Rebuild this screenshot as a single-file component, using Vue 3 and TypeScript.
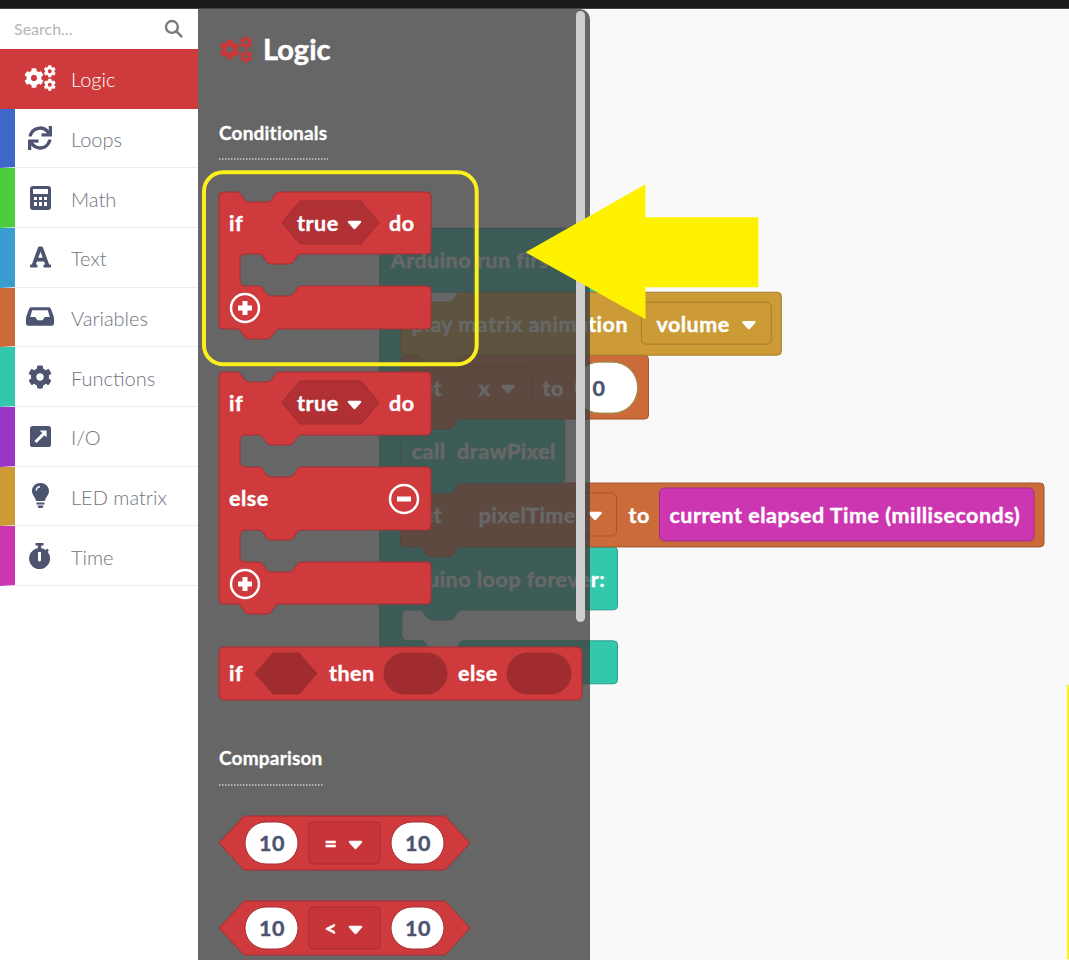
<template>
  <div class="page">
    <div class="topbar"></div>
    <div class="main">
      <!-- toolbox -->
      <aside class="toolbox">
        <div class="search">
          <span class="search-text">Search...</span>
          <svg class="search-ic" viewBox="0 0 24 24" fill="none" stroke="currentColor" stroke-width="3" stroke-linecap="round"><circle cx="10" cy="10" r="7.5" /><line x1="16" y1="16" x2="22" y2="22" /></svg>
        </div>
        <div
          v-for="cat in CATEGORIES"
          :key="cat.label"
          class="cat"
          :class="{ active: cat.label === 'Logic' }"
          :style="{ borderLeftColor: cat.color }"
        >
          <span class="cat-ic">
            <svg :width="cat.w" :height="cat.h" :viewBox="cat.box" fill="currentColor" fill-rule="evenodd" v-html="cat.svg" />
          </span>
          <span class="cat-label">{{ cat.label }}</span>
        </div>
      </aside>

      <section class="workspace">
        <!-- blocks on the canvas, coordinates are page coordinates -->
        <svg class="layer" viewBox="197 9 872 951">
          <path v-for="(s, i) in WORK_SHAPES" :key="i" :d="s.d" :fill="s.fill" :stroke="s.stroke" stroke-width="1" />
          <path v-for="(c, i) in WORK_CARETS" :key="'c' + i" class="caret" :d="caret(c[0], c[1])" />
          <text v-for="(t, i) in WORK_TEXT" :key="'t' + i" class="blk" :class="t.cls" :x="t.x" :y="t.y">{{ t.text }}</text>
        </svg>

        <!-- flyout -->
        <div class="flyout">
          <svg class="layer" viewBox="198 9 392 951">
            <svg x="219" y="36" width="34" height="27" viewBox="0 0 32 26" fill="#c8383b" fill-rule="evenodd" v-html="COGS" />
            <text class="fly-title" x="263" y="60">Logic</text>
            <text class="fly-head" x="219" y="140">Conditionals</text>
            <line class="dots" x1="219" x2="328" y1="159" y2="159" />
            <text class="fly-head" x="219" y="765">Comparison</text>
            <line class="dots" x1="219" x2="324" y1="785" y2="785" />

            <path v-for="(s, i) in FLY_SHAPES" :key="i" :d="s.d" :fill="s.fill" :stroke="s.stroke" stroke-width="1" />
            <path v-for="(c, i) in FLY_CARETS" :key="'c' + i" class="caret" :d="caret(c[0], c[1])" />
            <text v-for="(t, i) in FLY_TEXT" :key="'t' + i" class="blk" :class="t.cls" :x="t.x" :y="t.y">{{ t.text }}</text>

            <g v-for="b in PLUS" :key="'p' + b[1]" class="mut">
              <circle :cx="b[0]" :cy="b[1]" r="14" />
              <path :d="`M${b[0] - 7} ${b[1]}h14M${b[0]} ${b[1] - 7}v14`" />
            </g>
            <g class="mut">
              <circle cx="404" cy="499" r="14" />
              <path d="M397 499h14" />
            </g>

            <rect class="scroll" x="576" y="11" width="9" height="611" rx="4.5" />
          </svg>
        </div>

        <!-- annotation drawn on top of the screenshot -->
        <svg class="layer over" viewBox="197 9 872 951">
          <rect x="203" y="172" width="273" height="192" rx="19" fill="none" stroke="#fbf01e" stroke-width="4" />
          <polygon points="525,252 645,184 645,217 758,217 758,287 645,287 645,319" fill="#fff200" />
          <rect x="1067" y="685" width="2" height="275" fill="#fbf01e" />
        </svg>
      </section>
    </div>
  </div>
</template>

<script setup lang="ts">
type Shape = { d: string; fill: string; stroke: string };
type Label = { x: number; y: number; text: string; cls?: string };

const COG =
  'M487.4 315.7l-42.6-24.6c4.3-23.2 4.3-47 0-70.2l42.6-24.6c4.9-2.8 7.1-8.6 5.5-14-11.1-35.6-30-67.8-54.7-94.6-3.8-4.1-10-5.1-14.8-2.3L380.8 110c-17.9-15.4-38.5-27.3-60.8-35.1V25.8c0-5.6-3.9-10.5-9.4-11.7-36.7-8.2-74.3-7.8-109.2 0-5.5 1.2-9.4 6.1-9.4 11.7V75c-22.2 7.9-42.8 19.8-60.8 35.1L88.7 85.5c-4.9-2.8-11-1.9-14.8 2.3-24.7 26.7-43.6 58.9-54.7 94.6-1.7 5.4.6 11.2 5.5 14L67.3 221c-4.3 23.2-4.3 47 0 70.2l-42.6 24.6c-4.9 2.8-7.1 8.6-5.5 14 11.1 35.6 30 67.8 54.7 94.6 3.8 4.1 10 5.1 14.8 2.3l42.6-24.6c17.9 15.4 38.5 27.3 60.8 35.1v49.2c0 5.6 3.9 10.5 9.4 11.7 36.7 8.2 74.3 7.8 109.2 0 5.5-1.2 9.4-6.1 9.4-11.7v-49.2c22.2-7.9 42.8-19.8 60.8-35.1l42.6 24.6c4.9 2.8 11 1.9 14.8-2.3 24.7-26.7 43.6-58.9 54.7-94.6 1.5-5.5-.7-11.3-5.6-14.1zM256 336c-44.1 0-80-35.9-80-80s35.9-80 80-80 80 35.9 80 80-35.9 80-80 80z';

const COGS = `<g transform="translate(0 3) scale(.039)"><path d="${COG}"/></g><g transform="translate(19.5 0) scale(.0245)"><path d="${COG}"/></g><g transform="translate(19.5 13.5) scale(.0245)"><path d="${COG}"/></g>`;

const SYNC =
  'M440.65 12.57l4 82.77A247.16 247.16 0 0 0 255.83 8C134.73 8 33.91 94.92 12.29 209.82A12 12 0 0 0 24.09 224h49.05a12 12 0 0 0 11.67-9.26 175.91 175.91 0 0 1 317-56.94l-101.46-4.86a12 12 0 0 0-12.57 12v47.41a12 12 0 0 0 12 12H500a12 12 0 0 0 12-12V12a12 12 0 0 0-12-12h-47.37a12 12 0 0 0-11.98 12.57zM255.83 432a175.61 175.61 0 0 1-146-77.8l101.8 4.87a12 12 0 0 0 12.57-12v-47.4a12 12 0 0 0-12-12H12a12 12 0 0 0-12 12V500a12 12 0 0 0 12 12h47.35a12 12 0 0 0 12-12.6l-4.15-82.57A247.17 247.17 0 0 0 255.83 504c121.11 0 221.93-86.92 243.55-201.82a12 12 0 0 0-11.8-14.18h-49.05a12 12 0 0 0-11.67 9.26A175.86 175.86 0 0 1 255.83 432z';

const FONT_A =
  'M432 416h-23.41L277.88 53.69A32 32 0 0 0 247.58 32h-47.16a32 32 0 0 0-30.3 21.69L39.41 416H16a16 16 0 0 0-16 16v32a16 16 0 0 0 16 16h128a16 16 0 0 0 16-16v-32a16 16 0 0 0-16-16h-19.6l23.3-64h152.6l23.3 64H304a16 16 0 0 0-16 16v32a16 16 0 0 0 16 16h128a16 16 0 0 0 16-16v-32a16 16 0 0 0-16-16zM176.85 272L224 142.51 271.15 272z';

const CATEGORIES = [
  { label: 'Logic', color: '#cf3a3d', w: 32, h: 26, box: '0 0 32 26', svg: COGS },
  { label: 'Loops', color: '#3e67c9', w: 24, h: 24, box: '0 0 512 512', svg: `<path d="${SYNC}"/>` },
  { label: 'Math', color: '#4dcc3e', w: 21, h: 24, box: '0 0 21 24', svg: '<path d="M3 0H18a3 3 0 0 1 3 3V21a3 3 0 0 1-3 3H3a3 3 0 0 1-3-3V3a3 3 0 0 1 3-3ZM3 3V8H18V3ZM4 11V14H7V11ZM9 11V14H12V11ZM14 11V14H17V11ZM4 16V20H7V16ZM9 16V20H12V16ZM14 16V20H17V16Z"/>' },
  { label: 'Text', color: '#3b9ccf', w: 21, h: 24, box: '0 26 448 460', svg: `<path d="${FONT_A}"/>` },
  { label: 'Variables', color: '#cc6b3a', w: 28, h: 19, box: '0 0 54 36', svg: '<path d="M10 0H44Q47 0 48 3L54 20V32Q54 36 50 36H4Q0 36 0 32V20L6 3Q7 0 10 0ZM12 6 8 19H18L22 25H32L36 19H46L42 6Z"/>' },
  { label: 'Functions', color: '#33c7ae', w: 24, h: 24, box: '0 0 512 512', svg: `<path d="${COG}"/>` },
  { label: 'I/O', color: '#9b36c9', w: 21, h: 21, box: '0 0 24 24', svg: '<path d="M3 0H21a3 3 0 0 1 3 3V21a3 3 0 0 1-3 3H3a3 3 0 0 1-3-3V3a3 3 0 0 1 3-3ZM11 5 14 8 5 17 7.5 19.5 16.5 10.5 19 13V5Z"/>' },
  { label: 'LED matrix', color: '#cc9b36', w: 17, h: 25, box: '0 0 17 25', svg: '<path d="M8.5 0C13.3 0 17 3.5 17 8C17 12 14 13.5 12.8 18H4.2C3 13.5 0 12 0 8C0 3.5 3.7 0 8.5 0ZM8 3C5.5 3 3.5 5 3.5 7.5H5C5 5.7 6.3 4.5 8 4.5ZM4.5 19.5H12.5V21.5H4.5ZM5.5 22.5H11.5L10.5 25H6.5Z"/>' },
  { label: 'Time', color: '#cc36b0', w: 22, h: 26, box: '0 0 22 26', svg: '<path d="M6.5 0H14.5V2.5H12.2V5.2A10.5 10.5 0 0 1 16.8 7L18.2 5.6 20 7.4 18.6 8.8A10.5 10.5 0 1 1 8.8 5.2V2.5H6.5ZM9 9V17A1.5 1.5 0 0 0 12 17V9Z"/>' },
];

// block connector, running right
function notch(x: number, y: number) {
  return `L${x} ${y}C${x + 5} ${y} ${x + 6} ${y + 10} ${x + 12} ${y + 10}H${x + 30}C${x + 36} ${y + 10} ${x + 37} ${y} ${x + 42} ${y}`;
}
// same connector, running left from x
function back(x: number, y: number) {
  return `L${x} ${y}C${x - 5} ${y} ${x - 6} ${y + 10} ${x - 12} ${y + 10}H${x - 30}C${x - 36} ${y + 10} ${x - 37} ${y} ${x - 42} ${y}`;
}
function stack(x1: number, x2: number, top: number, bottom: number) {
  return (
    `M${x1} ${top + 4}Q${x1} ${top} ${x1 + 4} ${top}` + notch(x1 + 18, top) +
    `H${x2 - 4}Q${x2} ${top} ${x2} ${top + 4}V${bottom - 4}Q${x2} ${bottom} ${x2 - 4} ${bottom}` +
    back(x1 + 60, bottom) + `H${x1 + 4}Q${x1} ${bottom} ${x1} ${bottom - 4}Z`
  );
}
function cBlock(top: number, gaps: number[][], bottom: number) {
  let d = 'M219 ' + (top + 4) + `Q219 ${top} 223 ${top}` + notch(237, top) + `H427Q431 ${top} 431 ${top + 4}`;
  for (const [a, b] of gaps) {
    d += `V${a - 4}Q431 ${a} 427 ${a}` + back(301, a) + `H246Q240 ${a} 240 ${a + 6}V${b - 6}Q240 ${b} 246 ${b}` + notch(259, b) + `H427Q431 ${b} 431 ${b + 4}`;
  }
  return d + `V${bottom - 4}Q431 ${bottom} 427 ${bottom}` + back(279, bottom) + `H223Q219 ${bottom} 219 ${bottom - 4}Z`;
}
function hex(x1: number, x2: number, y1: number, y2: number, s: number) {
  const m = (y1 + y2) / 2;
  return `M${x1} ${m}L${x1 + s} ${y1}H${x2 - s}L${x2} ${m}L${x2 - s} ${y2}H${x1 + s}Z`;
}
function box(x1: number, x2: number, y1: number, y2: number, r: number) {
  return `M${x1 + r} ${y1}H${x2 - r}A${r} ${r} 0 0 1 ${x2} ${y1 + r}V${y2 - r}A${r} ${r} 0 0 1 ${x2 - r} ${y2}H${x1 + r}A${r} ${r} 0 0 1 ${x1} ${y2 - r}V${y1 + r}A${r} ${r} 0 0 1 ${x1 + r} ${y1}Z`;
}
function caret(x: number, y: number) {
  return `M${x} ${y}h11l-5.5 6z`;
}

const RED = '#cf3a3d';
const RED_LINE = '#a62e32';
const RED_DARK = '#a02c2f';
const TEAL = '#33c7ae';
const TEAL_LINE = '#299f8b';
const GOLD = '#cc9b36';
const GOLD_LINE = '#a37c2b';
const ORANGE = '#cc6b3a';
const ORANGE_LINE = '#a3562e';
const PURPLE = '#cc36b0';
const PURPLE_LINE = '#a32b8d';

const TEAL_PATH =
  'M383 228H596Q600 228 600 232V292H400V547H613Q617 547 617 551V606Q617 610 613 610' +
  back(461, 610) +
  'H407Q401 610 401 616V635Q401 641 407 641' +
  notch(421, 641) +
  'H613Q617 641 617 645V680Q617 684 613 684H383Q379 684 379 680V232Q379 228 383 228Z';

const WORK_SHAPES: Shape[] = [
  { d: TEAL_PATH, fill: TEAL, stroke: TEAL_LINE },
  { d: stack(400, 1044, 483, 547), fill: ORANGE, stroke: ORANGE_LINE },
  { d: box(463, 616, 493, 536, 5), fill: ORANGE, stroke: ORANGE_LINE },
  { d: box(659, 1034, 488, 541, 5), fill: PURPLE, stroke: PURPLE_LINE },
  { d: stack(400, 564, 419, 483), fill: TEAL, stroke: TEAL_LINE },
  { d: stack(400, 648, 355, 419), fill: ORANGE, stroke: ORANGE_LINE },
  { d: box(463, 531, 367, 408, 5), fill: ORANGE, stroke: ORANGE_LINE },
  { d: box(574, 637, 362, 413, 25), fill: '#ffffff', stroke: '#8a9a50' },
  { d: stack(400, 781, 292, 355), fill: GOLD, stroke: GOLD_LINE },
  { d: box(641, 771, 302, 344, 5), fill: GOLD, stroke: GOLD_LINE },
];
const WORK_CARETS = [[743, 322], [502, 386], [589, 513]];
const WORK_TEXT: Label[] = [
  { x: 390, y: 268, text: 'Arduino run first:' },
  { x: 411, y: 332, text: 'play matrix animation' },
  { x: 656, y: 332, text: 'volume' },
  { x: 411, y: 396, text: 'set' },
  { x: 478, y: 396, text: 'x' },
  { x: 542, y: 396, text: 'to' },
  { x: 592, y: 396, text: '0', cls: 'dark' },
  { x: 411, y: 459, text: 'call  drawPixel' },
  { x: 411, y: 523, text: 'set' },
  { x: 478, y: 523, text: 'pixelTime' },
  { x: 628, y: 523, text: 'to' },
  { x: 669, y: 523, text: 'current elapsed Time (milliseconds)' },
  { x: 390, y: 587, text: 'Arduino loop forever:' },
];

const FLY_SHAPES: Shape[] = [
  { d: cBlock(192, [[254, 286]], 329), fill: RED, stroke: RED_LINE },
  { d: hex(282, 379, 201, 244, 18), fill: '#b03034', stroke: RED_DARK },
  { d: cBlock(372, [[435, 467], [530, 562]], 604), fill: RED, stroke: RED_LINE },
  { d: hex(282, 379, 381, 424, 18), fill: '#b03034', stroke: RED_DARK },
  { d: box(219, 582, 647, 700, 5), fill: RED, stroke: RED_LINE },
  { d: hex(255, 317, 653, 694, 18), fill: RED_DARK, stroke: RED_DARK },
  { d: box(384, 447, 653, 694, 20.5), fill: RED_DARK, stroke: RED_DARK },
  { d: box(507, 571, 653, 694, 20.5), fill: RED_DARK, stroke: RED_DARK },
  { d: hex(219, 470, 816, 870, 25), fill: RED, stroke: RED_LINE },
  { d: box(245, 298, 822, 864, 21), fill: '#ffffff', stroke: RED_LINE },
  { d: box(309, 380, 822, 864, 4), fill: '#c83539', stroke: RED_LINE },
  { d: box(391, 444, 822, 864, 21), fill: '#ffffff', stroke: RED_LINE },
  { d: hex(219, 470, 901, 955, 25), fill: RED, stroke: RED_LINE },
  { d: box(245, 298, 907, 949, 21), fill: '#ffffff', stroke: RED_LINE },
  { d: box(309, 380, 907, 949, 4), fill: '#c83539', stroke: RED_LINE },
  { d: box(391, 444, 907, 949, 21), fill: '#ffffff', stroke: RED_LINE },
];
const FLY_CARETS = [[349, 222], [349, 402], [350, 842], [350, 927]];
const FLY_TEXT: Label[] = [
  { x: 229, y: 231, text: 'if' },
  { x: 297, y: 231, text: 'true' },
  { x: 389, y: 231, text: 'do' },
  { x: 229, y: 411, text: 'if' },
  { x: 297, y: 411, text: 'true' },
  { x: 389, y: 411, text: 'do' },
  { x: 229, y: 506, text: 'else' },
  { x: 229, y: 681, text: 'if' },
  { x: 329, y: 681, text: 'then' },
  { x: 458, y: 681, text: 'else' },
  { x: 272, y: 851, text: '10', cls: 'dark mid' },
  { x: 331, y: 851, text: '=', cls: 'mid' },
  { x: 418, y: 851, text: '10', cls: 'dark mid' },
  { x: 272, y: 936, text: '10', cls: 'dark mid' },
  { x: 331, y: 936, text: '<', cls: 'mid' },
  { x: 418, y: 936, text: '10', cls: 'dark mid' },
];
const PLUS = [[245, 308], [245, 584]];
</script>

<style scoped>
.page {
  height: 960px;
  display: flex;
  flex-direction: column;
  overflow: hidden;
  font-family: Lato, "Liberation Sans", sans-serif;
}
.topbar {
  height: 8px;
  background: #1a1a1a;
  border-bottom: 1px solid #444;
  flex-shrink: 0;
}
.main {
  flex: 1;
  display: flex;
  min-height: 0;
}

.toolbox {
  width: 198px;
  flex-shrink: 0;
  background: #fff;
}
.search {
  height: 40px;
  display: flex;
  align-items: center;
  justify-content: space-between;
  padding: 0 15px 2px 14px;
  box-sizing: border-box;
}
.search-text {
  font-size: 16px;
  color: #b5b5b5;
}
.search-ic {
  width: 19px;
  height: 19px;
  color: #7a7a7a;
}
.cat {
  height: 59.67px;
  box-sizing: border-box;
  display: flex;
  align-items: center;
  border-left: 15px solid;
  border-bottom: 1px solid #ececec;
  font-size: 20px;
  font-weight: 300;
  color: #6f7380;
}
.cat.active {
  background: #cf3a3d;
  color: #fff;
  border-bottom-color: #cf3a3d;
}
.cat-ic {
  width: 50px;
  margin-right: 6px;
  display: flex;
  justify-content: center;
  color: #4c5470;
}
.cat.active .cat-ic {
  color: #fff;
}
.cat-label {
  padding-top: 2px;
}

.workspace {
  flex: 1;
  position: relative;
  background: #f9f9f9;
}
.layer {
  display: block;
  width: 100%;
  height: 100%;
}
.layer.over {
  position: absolute;
  inset: 0;
}
.flyout {
  position: absolute;
  left: 0;
  top: 0;
  bottom: 0;
  width: 392px;
  background: rgba(65, 65, 65, 0.8);
  border-top-right-radius: 10px;
}

.blk {
  font-size: 21.5px;
  font-weight: 700;
  letter-spacing: 0.5px;
  fill: #fff;
  stroke: #fff;
  stroke-width: 0.4px;
  white-space: pre;
}
.blk.dark {
  fill: #4c5470;
  stroke: #4c5470;
}
.blk.mid {
  text-anchor: middle;
}
.caret {
  fill: #fff;
  stroke: #fff;
  stroke-width: 2.5;
  stroke-linejoin: round;
}
.fly-title {
  font-size: 29px;
  font-weight: 700;
  fill: #fff;
  stroke: #fff;
  stroke-width: 0.5px;
}
.fly-head {
  font-size: 19px;
  font-weight: 700;
  letter-spacing: 0.2px;
  fill: #fff;
  stroke: #fff;
  stroke-width: 0.3px;
}
.dots {
  stroke: #fff;
  stroke-width: 1;
  stroke-dasharray: 1.5 1.5;
}
.mut {
  fill: none;
  stroke: #fff;
}
.mut circle {
  stroke-width: 2.5;
}
.mut path {
  stroke-width: 5;
}
.scroll {
  fill: #cfcfcf;
}
</style>
